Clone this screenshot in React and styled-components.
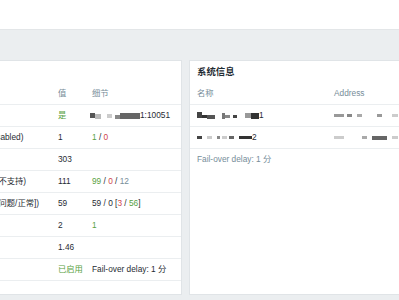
import React from 'react'
import styled, { createGlobalStyle } from 'styled-components'

const GlobalStyle = createGlobalStyle`
  html, body {
    margin: 0;
    padding: 0;
    background: #ffffff;
  }
  body {
    font-family: "Liberation Sans", "Noto Sans CJK SC", sans-serif;
    font-size: 8.3px;
    color: #1f2c33;
    overflow: hidden;
  }
`

const Page = styled.div`
  width: 399px;
  height: 300px;
  overflow: hidden;
  display: flex;
  flex-direction: column;
`

const TopBar = styled.div`
  height: 30px;
  flex-shrink: 0;
  background: #ffffff;
  border-bottom: 1px solid #e3e6e8;
  box-sizing: border-box;
`

const Dashboard = styled.div`
  flex: 1;
  background: #ebeef0;
  padding: 30px 0 5px 0;
  display: grid;
  grid-template-columns: 298px 300px;
  column-gap: 7px;
  margin-left: -116px;
`

const Widget = styled.div`
  background: #ffffff;
  border: 1px solid #e0e4e7;
  box-sizing: border-box;
  display: flex;
  flex-direction: column;
`

const WidgetTitle = styled.div`
  height: 22px;
  line-height: 22px;
  padding-left: 7px;
  font-size: 9.4px;
  font-weight: 700;
  color: #1f2c33;
`

const Table = styled.div`
  display: grid;
  grid-template-columns: ${(p) => p.cols};
`

const Row = styled.div`
  display: contents;
`

const Cell = styled.div`
  height: 21px;
  line-height: 21px;
  padding-left: 7px;
  border-bottom: 1px solid #ebeef0;
  white-space: nowrap;
  overflow: hidden;
  color: ${(p) => (p.$head ? '#768d99' : '#1f2c33')};
`

const Green = styled.span`
  color: #59a13f;
`

const Red = styled.span`
  color: #d0454c;
`

const Gray = styled.span`
  color: #768d99;
`

const Blur = styled.span`
  display: inline-block;
  vertical-align: middle;
  width: ${(p) => p.w}px;
  height: ${(p) => p.h || 4}px;
  background: ${(p) => p.c};
  margin-right: ${(p) => p.gap || 0}px;
  position: relative;
  top: ${(p) => p.dy || 0}px;
`

const Smudge = styled.div`
  display: flex;
  align-items: center;
  height: 100%;
`

const Note = styled.div`
  height: 20px;
  line-height: 20px;
  padding-left: 7px;
  color: #768d99;
`

const blurs = (list) =>
  list.map(([w, c, gap, h, dy], i) => <Blur key={i} w={w} c={c} gap={gap} h={h} dy={dy} />)

const statusRows = [
  { label: 'Zabbix 服务器端运行中', value: <Green>是</Green>, detail: (
    <Smudge style={{ marginLeft: -2 }}>
      {blurs([[5, '#555', 0, 5], [6, '#bbb', 6, 5, 1], [5, '#ccc', 3, 4], [5, '#888', 0, 4, 1], [20, '#666', 0, 6]])}
      <span>1:10051</span>
    </Smudge>
  ) },
  { label: 'Number of hosts (enabled/disabled)', value: '1', detail: <><Green>1</Green> / <Red>0</Red></> },
  { label: '模板数量', value: '303', detail: '' },
  { label: '监控项数量 （已启用/已禁用/不支持)', value: '111', detail: <><Green>99</Green> / <Red>0</Red> / <Gray>12</Gray></> },
  { label: '触发器数量（已启用/已禁用 [问题/正常])', value: '59', detail: <>59 / 0 [<Red>3</Red> / <Green>56</Green>]</> },
  { label: '用户数量(线上)', value: '2', detail: <Green>1</Green> },
  { label: '要求的主机性能', value: '1.46', detail: '' },
  { label: 'High availability cluster', value: <Green>已启用</Green>, detail: 'Fail-over delay: 1 分' },
]

const nodes = [
  {
    name: [[5, '#444', 0, 6, -1], [5, '#333', 0, 3, 1], [8, '#555', 7, 4, 1], [3, '#777', 0, 6], [5, '#888', 3, 3, 1], [4, '#444', 8, 3, 1], [6, '#999', 0, 5], [8, '#333', 0, 6]],
    id: '1',
    addr: [[10, '#999', 3, 3], [5, '#888', 5, 3], [5, '#aaa', 15, 3], [5, '#999', 10, 3], [6, '#ccc', 0, 3]],
  },
  {
    name: [[5, '#444', 5, 3], [5, '#ccc', 5, 3], [3, '#888', 2, 3], [5, '#ccc', 2, 3], [5, '#666', 5, 3], [13, '#333', 0, 3]],
    id: '2',
    addr: [[10, '#ccc', 18, 3], [5, '#aaa', 5, 3], [15, '#666', 5, 4], [6, '#ccc', 0, 3]],
  },
]

export default function App() {
  return (
    <Page>
      <GlobalStyle />
      <TopBar />
      <Dashboard>
        <Widget>
          <WidgetTitle>Zabbix 信息</WidgetTitle>
          <Table cols="166px 34px 1fr">
            <Row>
              <Cell $head>参数</Cell>
              <Cell $head>值</Cell>
              <Cell $head>细节</Cell>
            </Row>
            {statusRows.map((r) => (
              <Row key={r.label}>
                <Cell>{r.label}</Cell>
                <Cell>{r.value}</Cell>
                <Cell>{r.detail}</Cell>
              </Row>
            ))}
          </Table>
        </Widget>
        <Widget>
          <WidgetTitle>系统信息</WidgetTitle>
          <Table cols="137px 1fr">
            <Row>
              <Cell $head>名称</Cell>
              <Cell $head>Address</Cell>
            </Row>
            {nodes.map((n) => (
              <Row key={n.id}>
                <Cell>
                  <Smudge>
                    {blurs(n.name)}
                    <span>{n.id}</span>
                  </Smudge>
                </Cell>
                <Cell>
                  <Smudge>{blurs(n.addr)}</Smudge>
                </Cell>
              </Row>
            ))}
          </Table>
          <Note>Fail-over delay: 1 分</Note>
        </Widget>
      </Dashboard>
    </Page>
  )
}
